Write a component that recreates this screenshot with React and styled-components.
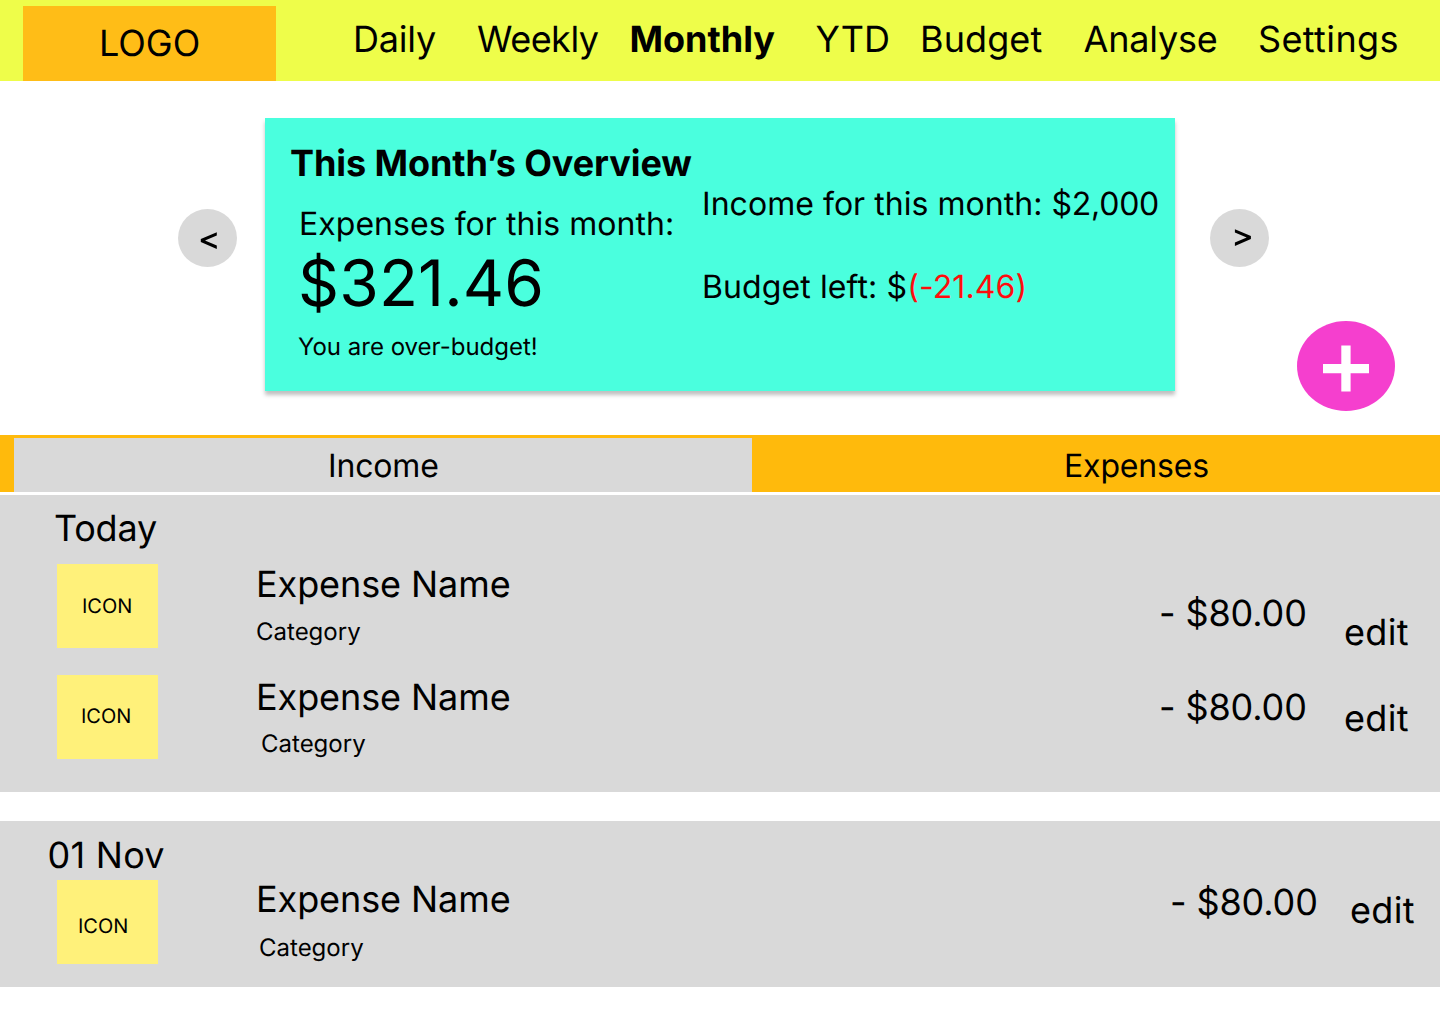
import React from "react";
import styled, { createGlobalStyle } from "styled-components";

const GlobalStyle = createGlobalStyle`
  *, *::before, *::after { box-sizing: border-box; }
  body {
    margin: 0;
    background: #ffffff;
    color: #000000;
    font-family: Inter, "Liberation Sans", sans-serif;
    text-rendering: geometricPrecision;
  }
  button { border: 0; padding: 0; font: inherit; color: inherit; }
`;

const Page = styled.div`
  width: 1440px;
  height: 1024px;
  overflow: hidden;
`;

const Header = styled.header`
  display: flex;
  align-items: flex-start;
  height: 81px;
  padding: 6px 0 0 23px;
  background: #eefd4a;
`;

const Logo = styled.div`
  flex: none;
  width: 253px;
  height: 75px;
  padding: 15px 0 0 76px;
  background: #ffbd17;
  font-size: 36px;
  line-height: 44px;
`;

const Nav = styled.nav`
  display: grid;
  grid-template-columns: 124px 152.5px 186px 104.5px 163.5px 174.5px auto;
  padding: 11px 0 0 77px;
`;

const NavItem = styled.a`
  font-size: 36px;
  line-height: 44px;
  font-weight: ${(p) => (p.$active ? 700 : 400)};
  letter-spacing: ${(p) => p.$tracking}px;
  white-space: nowrap;
`;

const Overview = styled.section`
  display: flex;
  align-items: flex-start;
  height: 354px;
  padding: 37px 0 0 178px;
`;

const ArrowButton = styled.button`
  flex: none;
  width: 59px;
  height: 58px;
  margin-top: 91px;
  border-radius: 50%;
  background: #d9d9d9;
  svg { display: block; }
`;

const Card = styled.article`
  display: grid;
  grid-template-columns: 411px 1fr;
  flex: none;
  width: 910px;
  height: 273px;
  margin: 0 35px 0 28px;
  padding: 23px 0 0 25px;
  background: #4affde;
  box-shadow: 0 4px 4px rgba(0, 0, 0, 0.25);
  white-space: nowrap;
`;

const CardTitle = styled.h1`
  margin: 0;
  font-size: 36px;
  line-height: 44px;
  font-weight: 700;
  letter-spacing: -0.07px;
`;

const Spending = styled.div`
  padding: 19px 0 0 8px;
`;

const Label = styled.p`
  margin: 0;
  padding-left: 1px;
  font-size: 32px;
  line-height: 39px;
  letter-spacing: ${(p) => p.$tracking}px;
`;

const Total = styled.p`
  margin: 2px 0 10px;
  font-size: 64px;
  line-height: 77px;
  letter-spacing: 0.15px;
`;

const Hint = styled.p`
  margin: 0;
  font-size: 24px;
  line-height: 29px;
`;

const Figures = styled.div`
  display: flex;
  flex-direction: column;
  gap: 44px;
  padding-top: 43px;
`;

const Amount = styled.span`
  letter-spacing: -0.25px;
`;

const Negative = styled.span`
  color: #ff0d0d;
`;

const AddButton = styled.button`
  flex: none;
  width: 98px;
  height: 90px;
  margin: 203px 0 0 28px;
  border-radius: 50%;
  background: #f53fce;
  svg { display: block; }
`;

const Tabs = styled.div`
  display: grid;
  grid-template-columns: 738px 1fr;
  height: 57px;
  margin-bottom: 3px;
  padding: 3px 0 0 14px;
  background: #ffba0c;
`;

const Tab = styled.div`
  padding: 8px 0 0 ${(p) => p.$inset}px;
  background: ${(p) => (p.$muted ? "#d9d9d9" : "transparent")};
  font-size: 32px;
  line-height: 39px;
  letter-spacing: -0.15px;
`;

const Group = styled.section`
  height: ${(p) => p.$height}px;
  margin-bottom: 29px;
  padding-top: ${(p) => p.$top}px;
  background: #d9d9d9;
`;

const GroupTitle = styled.h2`
  margin: 0 0 ${(p) => p.$gap}px;
  padding-left: ${(p) => p.$inset}px;
  font-size: 36px;
  line-height: 44px;
  font-weight: 400;
  letter-spacing: ${(p) => p.$tracking}px;
`;

const Row = styled.div`
  display: grid;
  grid-template-columns: 199px 902px 185px auto;
  align-items: start;
  height: 84px;
  margin-bottom: 27px;
  padding-left: 57px;
  white-space: nowrap;
`;

const IconTile = styled.div`
  width: 101px;
  height: 84px;
  padding: ${(p) => p.$top}px 0 0 ${(p) => p.$inset}px;
  background: #fff17a;
  font-size: 20px;
  line-height: 24px;
`;

const Details = styled.div`
  margin-top: ${(p) => p.$top}px;
`;

const Name = styled.div`
  font-size: 36px;
  line-height: 44px;
  letter-spacing: -0.08px;
`;

const Category = styled.div`
  padding: ${(p) => p.$gap}px 0 0 ${(p) => p.$inset}px;
  font-size: 24px;
  line-height: 29px;
`;

const Cell = styled.div`
  padding: ${(p) => p.$top}px 0 0 ${(p) => p.$inset}px;
  font-size: 36px;
  line-height: 44px;
  letter-spacing: ${(p) => p.$tracking}px;
`;

const navItems = [
  { label: "Daily", tracking: -0.2 },
  { label: "Weekly", tracking: -0.5 },
  { label: "Monthly", tracking: 0, active: true },
  { label: "YTD", tracking: 0.1 },
  { label: "Budget", tracking: 0.1 },
  { label: "Analyse", tracking: -0.2 },
  { label: "Settings", tracking: 0.38 },
];

const groups = [
  {
    title: "Today",
    tracking: -0.2,
    height: 297,
    top: 11,
    inset: 54,
    gap: 14,
    rows: [
      { icon: [30, 25], name: -2, category: [11, 0], amount: [27, 1], edit: [46, 1] },
      { icon: [29, 24], name: 0, category: [10, 5], amount: [10, 1], edit: [21, 1] },
    ],
  },
  {
    title: "01 Nov",
    tracking: 0.25,
    height: 166,
    top: 12,
    inset: 47.6,
    gap: 3,
    rows: [{ icon: [34, 21], name: -3, category: [12, 3], amount: [0, 12], edit: [8, 7] }],
  },
];

function ExpenseRow({ row }) {
  return (
    <Row>
      <IconTile $top={row.icon[0]} $inset={row.icon[1]}>ICON</IconTile>
      <Details $top={row.name}>
        <Name>Expense Name</Name>
        <Category $gap={row.category[0]} $inset={row.category[1]}>Category</Category>
      </Details>
      <Cell $top={row.amount[0]} $inset={row.amount[1]} $tracking={-0.12}>- $80.00</Cell>
      <Cell $top={row.edit[0]} $inset={row.edit[1]} $tracking={0.3}>edit</Cell>
    </Row>
  );
}

export default function App() {
  return (
    <Page>
      <GlobalStyle />
      <Header>
        <Logo>LOGO</Logo>
        <Nav>
          {navItems.map((item) => (
            <NavItem key={item.label} $active={item.active} $tracking={item.tracking}>
              {item.label}
            </NavItem>
          ))}
        </Nav>
      </Header>

      <Overview>
        <ArrowButton aria-label="Previous month">
          <svg width="59" height="58" viewBox="0 0 59 58">
            <path d="M22.8 30.1 L38.8 23.2 V26.5 L27 31.6 L38.8 36.6 V39.9 L22.8 33z" />
          </svg>
        </ArrowButton>
        <Card>
          <div>
            <CardTitle>This Month’s Overview</CardTitle>
            <Spending>
              <Label $tracking={0.04}>Expenses for this month:</Label>
              <Total>$321.46</Total>
              <Hint>You are over-budget!</Hint>
            </Spending>
          </div>
          <Figures>
            <Label $tracking={0.04}>Income for this month: <Amount>$2,000</Amount></Label>
            <Label $tracking={0.11}>Budget left: $<Negative>(-21.46)</Negative></Label>
          </Figures>
        </Card>
        <ArrowButton aria-label="Next month">
          <svg width="59" height="58" viewBox="0 0 59 58">
            <path d="M40.9 27.1 L24.9 20.2 V23.5 L36.7 28.6 L24.9 33.6 V36.9 L40.9 30z" />
          </svg>
        </ArrowButton>
        <AddButton aria-label="Add">
          <svg width="98" height="90" viewBox="0 0 98 90" fill="#fff">
            <path d="M44.3 24.5h9.3v18.4h18.4v9.3h-18.4v18.4h-9.3v-18.4h-18.3v-9.3h18.3z" />
          </svg>
        </AddButton>
      </Overview>

      <Tabs>
        <Tab $muted $inset={314}>Income</Tab>
        <Tab $inset={312}>Expenses</Tab>
      </Tabs>

      {groups.map((g) => (
        <Group key={g.title} $height={g.height} $top={g.top}>
          <GroupTitle $inset={g.inset} $gap={g.gap} $tracking={g.tracking}>{g.title}</GroupTitle>
          {g.rows.map((row, i) => <ExpenseRow key={i} row={row} />)}
        </Group>
      ))}
    </Page>
  );
}
